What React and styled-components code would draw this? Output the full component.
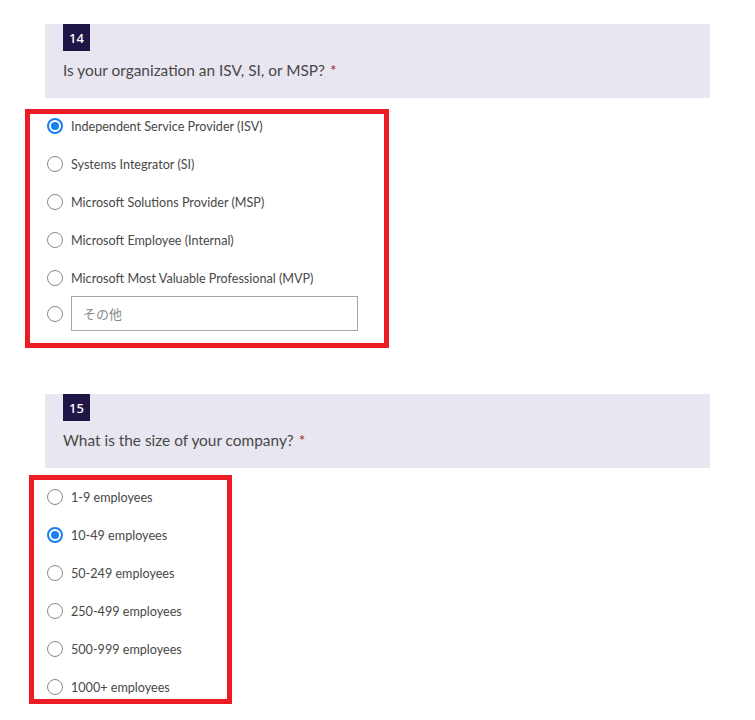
import React from 'react';
import styled, { createGlobalStyle } from 'styled-components';

const GlobalStyle = createGlobalStyle`
  body {
    margin: 0;
    background: #fff;
    font-family: Lato, "Noto Sans CJK JP", sans-serif;
    color: #404040;
  }
`;

const Page = styled.div`
  padding-top: 24px;
  width: 755px;
`;

const Section = styled.section`
  margin-top: ${(p) => p.$top || 0}px;
`;

const Header = styled.div`
  margin-left: 45px;
  width: 665px;
  height: 74px;
  box-sizing: border-box;
  background: #e8e6f1;
  padding-left: 18px;
`;

const Badge = styled.div`
  width: 27px;
  height: 27px;
  background: #201547;
  color: #fff;
  font-family: "Noto Sans", sans-serif;
  font-size: 13px;
  font-weight: 500;
  display: flex;
  align-items: center;
  justify-content: center;
`;

const Question = styled.div`
  margin-top: 9px;
  font-size: 15.4px;
  line-height: 20px;
  color: #484848;
`;

const Required = styled.span`
  color: #a4262c;
  margin-left: 5px;
`;

const Highlight = styled.div`
  margin-left: ${(p) => p.$left}px;
  margin-top: ${(p) => p.$top}px;
  width: ${(p) => p.$width}px;
  box-sizing: border-box;
  border: 5px solid #ed1c24;
  padding: ${(p) => p.$padTop}px 0 ${(p) => p.$padBottom}px ${(p) => 47 - p.$left - 5}px;
  display: flex;
  flex-direction: column;
  gap: 18px;
`;

const Option = styled.label`
  display: flex;
  align-items: center;
  height: 20px;
  font-size: 12.6px;
  color: #484848;
`;

const OtherRow = styled.div`
  display: flex;
  align-items: center;
  margin-top: -10px;
`;

const Radio = styled.span`
  flex: none;
  width: 16px;
  height: 16px;
  box-sizing: border-box;
  border-radius: 50%;
  border: ${(p) => (p.$checked ? '2px solid #1a7ff0' : '1px solid #8a8a8a')};
  margin-right: 8px;
  display: flex;
  align-items: center;
  justify-content: center;

  &::after {
    content: '';
    display: ${(p) => (p.$checked ? 'block' : 'none')};
    width: 8px;
    height: 8px;
    border-radius: 50%;
    background: #1a7ff0;
  }
`;

const OtherInput = styled.input`
  width: 287px;
  height: 35px;
  box-sizing: border-box;
  border: 1px solid #a6a6a6;
  padding: 0 11px;
  font-family: "Noto Sans CJK JP", sans-serif;
  font-size: 13px;
  outline: 0;

  &::placeholder {
    color: #8a8a8a;
  }
`;

const orgOptions = [
  { label: 'Independent Service Provider (ISV)', checked: true },
  { label: 'Systems Integrator (SI)' },
  { label: 'Microsoft Solutions Provider (MSP)' },
  { label: 'Microsoft Employee (Internal)' },
  { label: 'Microsoft Most Valuable Professional (MVP)' },
];

const sizeOptions = [
  { label: '1-9 employees' },
  { label: '10-49 employees', checked: true },
  { label: '50-249 employees' },
  { label: '250-499 employees' },
  { label: '500-999 employees' },
  { label: '1000+ employees' },
];

const QuestionHeader = ({ num, text }) => (
  <Header>
    <Badge>{num}</Badge>
    <Question>
      {text}
      <Required>*</Required>
    </Question>
  </Header>
);

const App = () => (
  <Page>
    <GlobalStyle />
    <Section>
      <QuestionHeader num="14" text="Is your organization an ISV, SI, or MSP?" />
      <Highlight $left={25} $top={11} $width={364} $padTop={2} $padBottom={12}>
        {orgOptions.map((o) => (
          <Option key={o.label}>
            <Radio $checked={o.checked} />
            {o.label}
          </Option>
        ))}
        <OtherRow>
          <Radio />
          <OtherInput placeholder="その他" />
        </OtherRow>
      </Highlight>
    </Section>
    <Section $top={46}>
      <QuestionHeader num="15" text="What is the size of your company?" />
      <Highlight $left={29} $top={7} $width={203} $padTop={7} $padBottom={2}>
        {sizeOptions.map((o) => (
          <Option key={o.label}>
            <Radio $checked={o.checked} />
            {o.label}
          </Option>
        ))}
      </Highlight>
    </Section>
  </Page>
);

export default App;
